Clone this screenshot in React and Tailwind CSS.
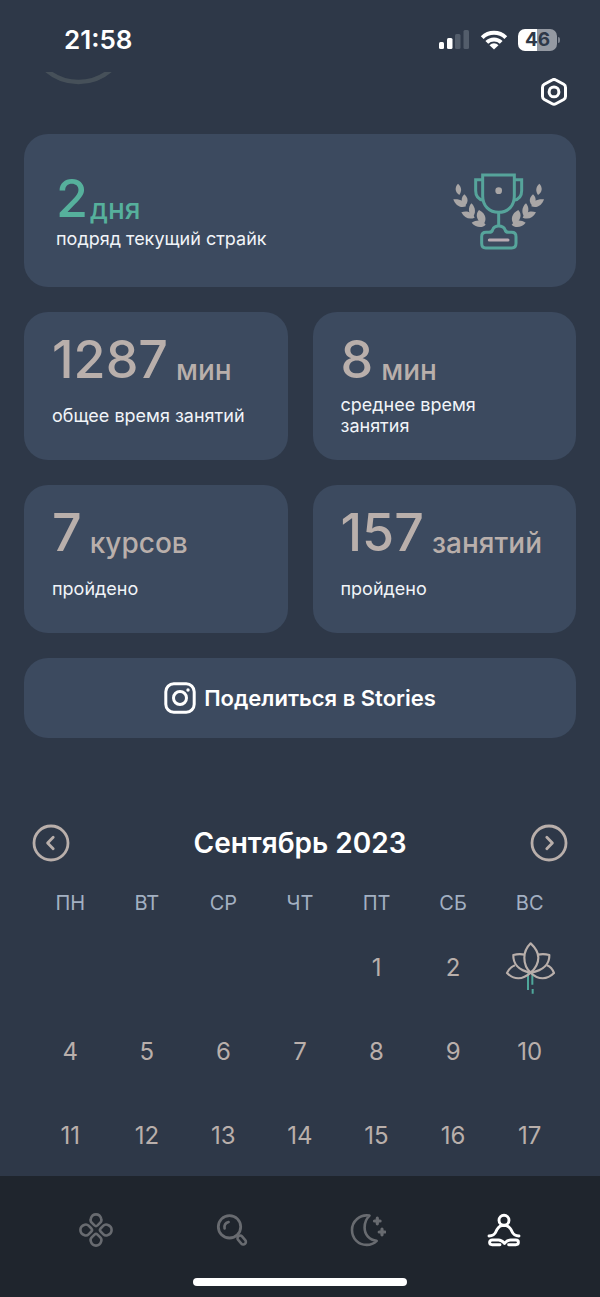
import React from "react";

function SignalIcon() {
  return (
    <svg className="h-5 w-8" viewBox="0 0 32 20" aria-hidden="true">
      <rect x="1" y="12" width="5" height="7" rx="1.5" fill="#fff" />
      <rect x="9" y="8" width="5.5" height="11" rx="1.5" fill="#fff" />
      <rect x="17" y="4" width="5.5" height="15" rx="1.5" fill="#535d6b" />
      <rect x="25.500" y="0" width="5.500" height="19" rx="1.500" fill="#535d6b" />
    </svg>
  );
}

function WifiIcon() {
  return (
    <svg className="h-5 w-7" viewBox="0 0 28 20" aria-hidden="true">
      <g fill="none" stroke="#fff" strokeWidth="4">
        <path d="M2.200 7.600a17 17 0 0 1 23.600 0" />
        <path d="M6.800 12.400a10.300 10.300 0 0 1 14.400 0" />
      </g>
      <path d="M14 19.600l-4.500-4.400a6.300 6.300 0 0 1 9 0z" fill="#fff" />
    </svg>
  );
}

function SettingsIcon() {
  return (
    <svg className="h-7 w-7" viewBox="0 0 28 28" fill="none" stroke="#fff" strokeWidth="3" aria-hidden="true">
      <path strokeLinejoin="round" d="M12.200 2a3.600 3.600 0 0 1 3.600 0l7.900 4.300a3.600 3.600 0 0 1 1.800 3.100v9a3.600 3.600 0 0 1-1.800 3.100l-7.900 4.300a3.600 3.600 0 0 1-3.600 0l-7.900-4.300a3.600 3.600 0 0 1-1.800-3.100v-9a3.600 3.600 0 0 1 1.800-3.100z" />
      <circle cx="14" cy="13.900" r="4.900" />
    </svg>
  );
}

function Leaves() {
  return (
    <g fill="#a9a6a6">
      <path d="M83 99c-10 10-10 24 4 34 8-13 7-24-4-34z" />
      <path d="M69 146c6 19 22 28 38 21-3-16-19-23-38-21z" />
      <path d="M102 131c-10 9-11 24-1 36 14-9 14-25 1-36z" />
      <path d="M93 185c9 17 24 23 40 16-6-16-22-22-40-16z" />
      <path d="M123 158c-10 12-10 28 3 43 11-11 11-31-3-43z" />
      <path d="M124 216c12 15 32 17 42 6-9-14-25-17-42-6z" />
      <path d="M146 178c-12 13-8 31 12 44 13-13 9-34-12-44z" />
    </g>
  );
}

function TrophyIcon() {
  return (
    <svg className="h-20 w-24 shrink-0" viewBox="65 61 288 240" fill="none" aria-hidden="true">
      <g stroke="#56a49b" strokeWidth="9">
        <path d="M157 73h95v62c0 31-19 50-47 50s-48-19-48-50z" />
        <path d="M157 87h-21v33c0 18 8 26 24 29M252 87h22v33c0 18-8 26-24 29" />
        <path d="M205 185v44" />
        <path strokeLinejoin="round" d="M167 245h9c7 0 10-3 11-8 3-8 10-11 18-11s16 3 19 11c1 5 4 8 11 8h9c8 0 13 5 13 13v20c0 9-4 14-13 14h-78c-8 0-12-5-12-14v-20c0-8 4-13 13-13z" />
      </g>
      <circle cx="205" cy="120" r="10" fill="#a9a6a6" />
      <path d="M177 268h56" stroke="#b9abb3" strokeWidth="9" strokeLinecap="round" />
      <Leaves />
      <g transform="matrix(-1 0 0 1 410 0)">
        <Leaves />
      </g>
    </svg>
  );
}

function InstagramIcon() {
  return (
    <svg className="h-8 w-8" viewBox="0 0 32 32" fill="none" stroke="#fff" strokeWidth="3" aria-hidden="true">
      <rect x="1.800" y="1.800" width="28.400" height="28.400" rx="8" />
      <circle cx="16" cy="16" r="6.500" />
      <circle cx="24" cy="8" r="1.700" fill="#fff" stroke="none" />
    </svg>
  );
}

function ChevronCircle({ flip }) {
  return (
    <svg className={flip ? "h-[38px] w-[38px] -scale-x-100" : "h-[38px] w-[38px]"} viewBox="0 0 38 38" fill="none" stroke="#b9afab" strokeWidth="2.800" aria-hidden="true">
      <circle cx="19" cy="19" r="17" />
      <path d="M16.800 13.200l5.600 5.800-5.600 5.800" strokeWidth="2.800" strokeLinecap="round" strokeLinejoin="round" />
    </svg>
  );
}

function LotusIcon() {
  return (
    <svg className="mx-auto h-[54px] w-[51px] max-w-none" viewBox="42 395 153 162" fill="none" aria-label="3" role="img">
      <g stroke="#4fa79b" strokeWidth="6">
        <path d="M114 492v50M127 492v34M128 539v14" />
      </g>
      <g stroke="#b9afab" strokeWidth="6.500" strokeLinejoin="round">
        <path d="M122 402c-13 13-19 27-19 43 0 18 7 34 19 45 12-11 23-27 23-45 0-16-9-30-23-43z" />
        <path d="M104 436c-10-2-22-2-34 1-1 24 14 46 52 53" />
        <path d="M144 436c10-2 22-2 34 1 1 24-15 46-56 53" />
        <path d="M75 468c-11 4-19 13-24 23 20 20 46 22 71-1" />
        <path d="M171 468c10 4 17 13 21 23-20 20-46 22-70-1" />
      </g>
    </svg>
  );
}

function HomeIcon() {
  const petal = "M16.500 13.400l-2.800-2.800c-1.200-1.200-1.400-2.600-.9-4C13.600 4 15.500 2.400 18 2.400s4.400 1.600 5.200 4.200c.5 1.400.3 2.800-.9 4l-2.800 2.800c-1 .9-2 .9-3 0z";
  return (
    <svg className="h-9 w-9" viewBox="0 0 36 36" fill="none" stroke="currentColor" strokeWidth="2.600" strokeLinejoin="round" aria-hidden="true">
      <path d={petal} />
      <path d={petal} transform="rotate(90 18 18)" />
      <path d={petal} transform="rotate(180 18 18)" />
      <path d={petal} transform="rotate(270 18 18)" />
    </svg>
  );
}

function SearchIcon() {
  return (
    <svg className="h-9 w-9" viewBox="0 0 36 36" fill="none" stroke="currentColor" strokeLinecap="round" aria-hidden="true">
      <circle cx="15.500" cy="14.800" r="11.200" strokeWidth="2.800" />
      <path d="M10.600 16.500c-.6-3.500 1-5.600 4-6.400" strokeWidth="2.600" />
      <rect x="-2.600" y="-5" width="5.200" height="10" rx="2.600" transform="translate(27.700 28) rotate(-42)" strokeWidth="2.600" />
    </svg>
  );
}

function MoonIcon() {
  return (
    <svg className="h-9 w-9" viewBox="0 0 36 36" fill="none" stroke="currentColor" strokeWidth="2.600" strokeLinejoin="round" aria-hidden="true">
      <path d="M19.500 3.600C9.700 2 2 9.400 2 18c0 8.500 6.200 14.900 14.700 14.900 4 0 7.400-1.500 10-4.100-7.200-.6-12.100-6-12.100-13.300 0-4.700 1.700-8.900 4.900-11.900z" />
      <path d="M27.300 6.200v5.600M24.500 9h5.600M32 17.200v5.600M29.200 20h5.600" strokeWidth="3.200" strokeLinecap="round" />
    </svg>
  );
}

function ProfileIcon() {
  return (
    <svg className="h-9 w-9" viewBox="0 0 36 36" fill="none" stroke="currentColor" strokeWidth="2.900" strokeLinecap="round" strokeLinejoin="round" aria-hidden="true">
      <circle cx="18" cy="8.200" r="5" />
      <path d="M3 24c4 0 5.700-1.300 6.900-4.200 1.500-3.700 3.200-5.600 5.800-6.200h4.600c2.600.6 4.300 2.500 5.800 6.200C27.300 22.700 29 24 33 24" />
      <path d="M18.500 31.200c-1.500-1.600-3.500-3.200-6-3.200H6.200C4.700 28 3.600 29 3.600 30.300s1.100 2.400 2.600 2.400h7.800" />
      <path d="M18.500 31.200c1.500-1.600 3.500-3.200 6-3.200h5.300c1.500 0 2.600 1 2.600 2.300s-1.100 2.400-2.600 2.400h-7.200" />
    </svg>
  );
}

function Amount({ value, unit, className }) {
  return (
    <p className={`flex items-end font-medium ${className}`}>
      <span className="text-[52px] leading-[56px]">{value}</span>
      <span className="text-[28px] leading-9">{unit}</span>
    </p>
  );
}

function StatCard({ value, unit, label }) {
  return (
    <article className="rounded-3xl bg-[#3c4a5f] px-7 pt-5 pb-6">
      <Amount value={value} unit={unit} className="gap-2 text-[#b9afab]" />
      <p className="mt-1.5 flex h-[42px] items-center text-lg leading-[21px] text-[#f1f4f8]">{label}</p>
    </article>
  );
}

const STATS = [
  { value: "1287", unit: "мин", label: "общее время занятий" },
  { value: "8", unit: "мин", label: "среднее время занятия" },
  { value: "7", unit: "курсов", label: "пройдено" },
  { value: "157", unit: "занятий", label: "пройдено" },
];

const WEEKDAYS = ["ПН", "ВТ", "СР", "ЧТ", "ПТ", "СБ", "ВС"];

const WEEKS = [
  [null, null, null, null, 1, 2, 3],
  [4, 5, 6, 7, 8, 9, 10],
  [11, 12, 13, 14, 15, 16, 17],
];

const PRACTICE_DAYS = [3];

const TABS = [
  { name: "Главная", Icon: HomeIcon },
  { name: "Поиск", Icon: SearchIcon },
  { name: "Сон", Icon: MoonIcon },
  { name: "Профиль", Icon: ProfileIcon, active: true },
];

function Calendar() {
  return (
    <section className="mt-[86px] px-8">
      <div className="flex items-center justify-between">
        <button type="button" aria-label="Предыдущий месяц">
          <ChevronCircle flip />
        </button>
        <h2 className="text-[28px] leading-8 font-semibold text-white">Сентябрь 2023</h2>
        <button type="button" aria-label="Следующий месяц">
          <ChevronCircle />
        </button>
      </div>
      <table className="mt-[18px] w-full table-fixed text-center">
        <thead>
          <tr className="h-[46px]">
            {WEEKDAYS.map((day) => (
              <th key={day} scope="col" className="p-0 text-xl leading-6 font-normal text-[#a3b0c2]">
                {day}
              </th>
            ))}
          </tr>
        </thead>
        <tbody>
          {WEEKS.map((week, row) => (
            <tr key={row} className="h-[84px]">
              {week.map((day, column) => (
                <td key={column} className="p-0 text-2xl text-[#b9afab]">
                  {PRACTICE_DAYS.includes(day) ? <LotusIcon /> : day}
                </td>
              ))}
            </tr>
          ))}
        </tbody>
      </table>
    </section>
  );
}

export default function App() {
  return (
    <div className="flex min-h-screen flex-col bg-[#2e3848] font-['Inter','Noto_Sans',sans-serif]">
      <div className="flex h-[72px] items-center justify-between pt-2 pr-10 pl-16">
        <time className="text-[26px] leading-8 font-semibold text-white">21:58</time>
        <div className="flex items-center gap-2.5">
          <SignalIcon />
          <WifiIcon />
          <div className="flex items-center gap-px">
            <span className="flex h-[22px] w-[39px] items-center justify-center rounded-[7px] bg-linear-to-r from-white from-50% to-[#9499a2] to-50% text-[19px] leading-5 font-bold text-[#2e3848]">
              46
            </span>
            <span className="h-1.5 w-0.5 rounded-r-full bg-[#7b828e]" />
          </div>
        </div>
      </div>

      <header className="flex h-[62px] items-start justify-between pr-8 pl-11">
        <svg className="h-[13px] w-[70px]" viewBox="44 72 70 13" fill="none" aria-hidden="true">
          <circle cx="78.500" cy="33" r="49" stroke="#465059" strokeWidth="4.500" />
        </svg>
        <button type="button" aria-label="Настройки" className="mt-1.5">
          <SettingsIcon />
        </button>
      </header>

      <main className="grow">
        <div className="flex flex-col gap-[25px] px-6">
          <section className="flex min-h-[153px] items-center justify-between rounded-3xl bg-[#3c4a5f] pr-7 pl-8">
            <div>
              <Amount value="2" unit="дня" className="gap-0.5 text-[#56b09c]" />
              <p className="text-lg leading-6 text-[#f1f4f8]">подряд текущий страйк</p>
            </div>
            <TrophyIcon />
          </section>

          <section className="grid grid-cols-2 gap-[25px]">
            {STATS.map((stat) => (
              <StatCard key={stat.value} {...stat} />
            ))}
          </section>

          <button type="button" className="flex h-20 items-center justify-center gap-2 rounded-3xl bg-[#3c4a5f] text-[22px] leading-7 font-semibold text-white">
            <InstagramIcon />
            Поделиться в Stories
          </button>
        </div>

        <Calendar />
      </main>

      <nav className="sticky bottom-0 -mt-0.5 flex h-[121px] flex-col justify-between bg-[#1f252d] pb-[11px]">
        <ul className="grid grid-cols-4 px-7 pt-9">
          {TABS.map(({ name, Icon, active }) => (
            <li key={name} className="flex justify-center">
              <a href="#" aria-label={name} aria-current={active ? "page" : undefined} className={active ? "text-white" : "text-[#686b70]"}>
                <Icon />
              </a>
            </li>
          ))}
        </ul>
        <div className="mx-auto h-2 w-[214px] rounded-full bg-white" />
      </nav>
    </div>
  );
}
